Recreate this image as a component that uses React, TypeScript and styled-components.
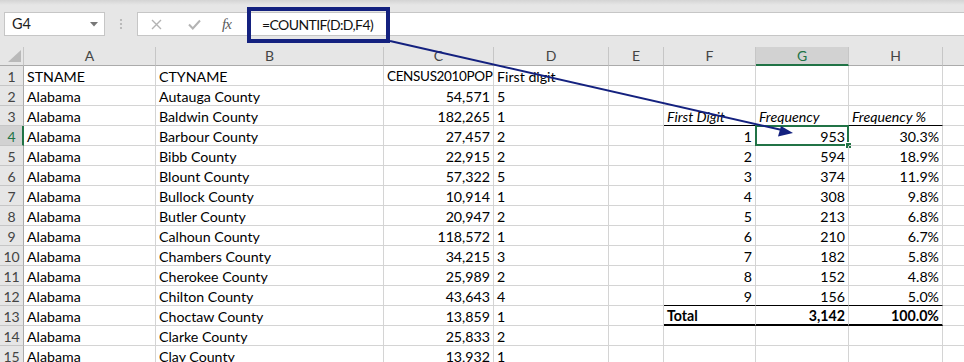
import React from "react";
import styled, { createGlobalStyle, css } from "styled-components";

const GlobalStyle = createGlobalStyle`
  html, body { margin: 0; padding: 0; background: #ffffff; }
  body { font-family: Lato, "Noto Sans", sans-serif; }
`;

const FONT = `Lato, "Liberation Sans", sans-serif`;
const GRID = "#d4d4d4";
const GREEN = "#217346";
const HEADER_BG = "#e6e6e6";
const HEADER_SEL = "#d2d2d2";

const Page = styled.div`
  position: relative;
  width: 964px;
  height: 362px;
  overflow: hidden;
  background: #ffffff;
`;

const TopStrip = styled.div`
  height: 5px;
  background: linear-gradient(#d4d4d4, #e6e6e6);
`;

const Toolbar = styled.div`
  display: flex;
  align-items: flex-start;
  height: 42px;
  box-sizing: border-box;
  padding-top: 7px;
  background: ${HEADER_BG};
`;

const NameBox = styled.div`
  margin-left: 4px;
  width: 101px;
  height: 24px;
  box-sizing: border-box;
  background: #ffffff;
  border: 1px solid #c6c6c6;
  font: 14.5px ${FONT};
  color: #222;
  line-height: 22px;
  padding-left: 7px;
  display: flex;
  align-items: center;
  justify-content: space-between;
  padding-right: 6px;
`;

const Dots = styled.div`
  width: 32px;
  height: 24px;
  display: flex;
  align-items: center;
  justify-content: center;
`;

const FxButtons = styled.div`
  width: 110px;
  height: 24px;
  box-sizing: border-box;
  background: #ffffff;
  border: 1px solid #c6c6c6;
  border-right: none;
  display: flex;
  align-items: center;
  padding-left: 13px;
`;

const IconSlot = styled.div<{ $w: number }>`
  width: ${(p) => p.$w}px;
  display: flex;
  align-items: center;
`;

const FxText = styled.span`
  font: italic 15px "Liberation Serif", serif;
  color: #5a5a5a;
  letter-spacing: -1px;
`;

const FormulaInput = styled.div`
  flex: 1;
  height: 24px;
  box-sizing: border-box;
  background: #ffffff;
  border-top: 1px solid #c6c6c6;
  border-bottom: 1px solid #c6c6c6;
  font: 14px ${FONT};
  letter-spacing: -0.6px;
  color: #111;
  line-height: 23px;
  padding-left: 15px;
`;

const Sheet = styled.div`
  display: grid;
  grid-template-columns: 24px 132px 228px 110px 115px 55px 92px 93px 94px 64px;
  grid-template-rows: 19px;
  grid-auto-rows: 20px;
  font: 14.2px ${FONT};
`;

const Corner = styled.div`
  background: ${HEADER_BG};
  border-right: 1px solid #c6c6c6;
  border-bottom: 1px solid #ababab;
  display: flex;
  align-items: flex-end;
  justify-content: flex-end;
  padding: 0 2px 3px 0;
`;

const ColHeader = styled.div<{ $sel?: boolean }>`
  background: ${(p) => (p.$sel ? HEADER_SEL : HEADER_BG)};
  border-right: 1px solid #c6c6c6;
  border-bottom: ${(p) => (p.$sel ? `2px solid ${GREEN}` : "1px solid #ababab")};
  color: ${(p) => (p.$sel ? GREEN : "#444")};
  text-align: center;
  font-size: 14px;
  line-height: ${(p) => (p.$sel ? "17px" : "18px")};
  overflow: hidden;
`;

const RowHeader = styled.div<{ $sel?: boolean }>`
  background: ${(p) => (p.$sel ? HEADER_SEL : HEADER_BG)};
  border-right: ${(p) => (p.$sel ? `2px solid ${GREEN}` : "1px solid #ababab")};
  border-bottom: 1px solid #c6c6c6;
  color: ${(p) => (p.$sel ? GREEN : "#444")};
  text-align: center;
  font-size: 14px;
  line-height: 21px;
  box-sizing: border-box;
  overflow: hidden;
  padding-left: ${(p) => (p.$sel ? "1px" : "0")};
`;

type Edge = "thin" | "thick" | undefined;

const Cell = styled.div<{
  $align?: "left" | "right";
  $italic?: boolean;
  $bold?: boolean;
  $bottom?: Edge;
  $active?: boolean;
  $tight?: boolean;
}>`
  position: relative;
  box-sizing: border-box;
  border-right: 1px solid ${GRID};
  border-bottom: ${(p) =>
    p.$bottom === "thick"
      ? "2px solid #000"
      : p.$bottom === "thin"
      ? "1px solid #000"
      : `1px solid ${GRID}`};
  text-align: ${(p) => p.$align || "left"};
  font-style: ${(p) => (p.$italic ? "italic" : "normal")};
  font-weight: ${(p) => (p.$bold ? 700 : 400)};
  font-size: ${(p) => (p.$tight ? "13.5px" : "inherit")};
  letter-spacing: ${(p) => (p.$tight ? "-0.35px" : "0")};
  color: #000;
  padding: 0 3px;
  line-height: ${(p) => (p.$bottom === "thick" ? "20px" : "21px")};
  white-space: nowrap;
  overflow: ${(p) => (p.$active ? "visible" : "hidden")};
  ${(p) =>
    p.$active &&
    css`
      &::before {
        content: "";
        position: absolute;
        top: -1px;
        left: -1px;
        right: -1px;
        bottom: -1px;
        border: 2px solid ${GREEN};
        pointer-events: none;
      }
      &::after {
        content: "";
        position: absolute;
        right: -4px;
        bottom: -4px;
        width: 5px;
        height: 5px;
        background: ${GREEN};
        border: 1px solid #fff;
      }
    `}
`;

const Overlay = styled.svg`
  position: absolute;
  left: 0;
  top: 0;
  pointer-events: none;
  z-index: 10;
`;

type C = {
  v?: string;
  align?: "left" | "right";
  italic?: boolean;
  bold?: boolean;
  bottom?: Edge;
  active?: boolean;
  tight?: boolean;
};

const counties: [string, string, string][] = [
  ["Autauga County", "54,571", "5"],
  ["Baldwin County", "182,265", "1"],
  ["Barbour County", "27,457", "2"],
  ["Bibb County", "22,915", "2"],
  ["Blount County", "57,322", "5"],
  ["Bullock County", "10,914", "1"],
  ["Butler County", "20,947", "2"],
  ["Calhoun County", "118,572", "1"],
  ["Chambers County", "34,215", "3"],
  ["Cherokee County", "25,989", "2"],
  ["Chilton County", "43,643", "4"],
  ["Choctaw County", "13,859", "1"],
  ["Clarke County", "25,833", "2"],
  ["Clay County", "13,932", "1"],
];

const freq: [string, string, string][] = [
  ["1", "953", "30.3%"],
  ["2", "594", "18.9%"],
  ["3", "374", "11.9%"],
  ["4", "308", "9.8%"],
  ["5", "213", "6.8%"],
  ["6", "210", "6.7%"],
  ["7", "182", "5.8%"],
  ["8", "152", "4.8%"],
  ["9", "156", "5.0%"],
];

const COLS = ["A", "B", "C", "D", "E", "F", "G", "H", ""];

function buildRows(): C[][] {
  const rows: C[][] = [];
  rows.push([
    { v: "STNAME" },
    { v: "CTYNAME" },
    { v: "CENSUS2010POP", tight: true },
    { v: "First digit" },
    {}, {}, {}, {}, {},
  ]);
  counties.forEach(([name, pop, d], i) => {
    const r = i + 2;
    const row: C[] = [{ v: "Alabama" }, { v: name }, { v: pop, align: "right" }, { v: d }, {}];
    if (r === 3) {
      row.push(
        { v: "First Digit", italic: true, bottom: "thin" },
        { v: "Frequency", italic: true, bottom: "thin" },
        { v: "Frequency %", italic: true, bottom: "thin" }
      );
    } else if (r >= 4 && r <= 12) {
      const [a, b, c] = freq[r - 4];
      const bottom: Edge = r === 12 ? "thin" : undefined;
      row.push(
        { v: a, align: "right", bottom },
        { v: b, align: "right", bottom, active: r === 4 },
        { v: c, align: "right", bottom }
      );
    } else if (r === 13) {
      row.push(
        { v: "Total", bold: true, bottom: "thick" },
        { v: "3,142", align: "right", bold: true, bottom: "thick" },
        { v: "100.0%", align: "right", bold: true, bottom: "thick" }
      );
    } else {
      row.push({}, {}, {});
    }
    row.push({});
    rows.push(row);
  });
  return rows;
}

export default function App() {
  const rows = buildRows();
  return (
    <Page>
      <GlobalStyle />
      <TopStrip />
      <Toolbar>
        <NameBox>
          <span>G4</span>
          <svg width="8" height="5" viewBox="0 0 8 5">
            <path d="M0 0 L8 0 L4 4.5 Z" fill="#777" />
          </svg>
        </NameBox>
        <Dots>
          <svg width="4" height="12" viewBox="0 0 4 12">
            <circle cx="2" cy="2" r="1.1" fill="#b0b0b0" />
            <circle cx="2" cy="6" r="1.1" fill="#b0b0b0" />
            <circle cx="2" cy="10" r="1.1" fill="#b0b0b0" />
          </svg>
        </Dots>
        <FxButtons>
          <IconSlot $w={37}>
            <svg width="11" height="11" viewBox="0 0 11 11">
              <path d="M1 1 L10 10 M10 1 L1 10" stroke="#b3b3b3" strokeWidth="1.4" />
            </svg>
          </IconSlot>
          <IconSlot $w={34}>
            <svg width="13" height="11" viewBox="0 0 13 11">
              <path d="M1 5.5 L4.8 9.5 L12 1.5" stroke="#b3b3b3" strokeWidth="2" fill="none" />
            </svg>
          </IconSlot>
          <IconSlot $w={20}>
            <FxText>fx</FxText>
          </IconSlot>
        </FxButtons>
        <FormulaInput>=COUNTIF(D:D,F4)</FormulaInput>
      </Toolbar>
      <Sheet>
        <Corner>
          <svg width="13" height="12" viewBox="0 0 13 12">
            <path d="M13 0 L13 12 L0 12 Z" fill="#b9b9b9" />
          </svg>
        </Corner>
        {COLS.map((c, i) => (
          <ColHeader key={i} $sel={c === "G"}>
            {c}
          </ColHeader>
        ))}
        {rows.map((row, ri) => (
          <React.Fragment key={ri}>
            <RowHeader $sel={ri + 1 === 4}>{ri + 1}</RowHeader>
            {row.map((cell, ci) => (
              <Cell
                key={ci}
                $align={cell.align}
                $italic={cell.italic}
                $bold={cell.bold}
                $bottom={cell.bottom}
                $active={cell.active}
                $tight={cell.tight}
              >
                {cell.v}
              </Cell>
            ))}
          </React.Fragment>
        ))}
      </Sheet>
      <Overlay width="964" height="362" viewBox="0 0 964 362">
        <rect x="249" y="9" width="139" height="32" fill="none" stroke="#14217f" strokeWidth="4" />
        <line x1="390" y1="41" x2="782" y2="130" stroke="#14217f" strokeWidth="2" />
        <path d="M793 133 L778 136.5 L781 126 Z" fill="#14217f" />
      </Overlay>
    </Page>
  );
}
